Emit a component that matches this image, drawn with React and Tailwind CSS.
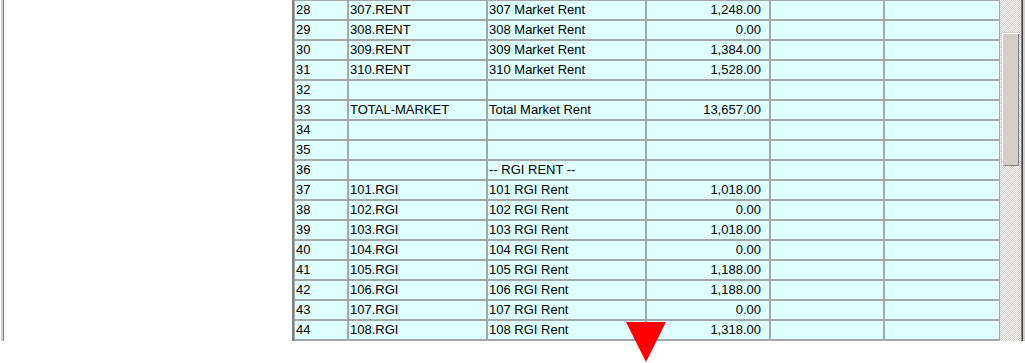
const rows = [
  ['28', '307.RENT', '307 Market Rent', '1,248.00'],
  ['29', '308.RENT', '308 Market Rent', '0.00'],
  ['30', '309.RENT', '309 Market Rent', '1,384.00'],
  ['31', '310.RENT', '310 Market Rent', '1,528.00'],
  ['32', '', '', ''],
  ['33', 'TOTAL-MARKET', 'Total Market Rent', '13,657.00'],
  ['34', '', '', ''],
  ['35', '', '', ''],
  ['36', '', '-- RGI RENT --', ''],
  ['37', '101.RGI', '101 RGI Rent', '1,018.00'],
  ['38', '102.RGI', '102 RGI Rent', '0.00'],
  ['39', '103.RGI', '103 RGI Rent', '1,018.00'],
  ['40', '104.RGI', '104 RGI Rent', '0.00'],
  ['41', '105.RGI', '105 RGI Rent', '1,188.00'],
  ['42', '106.RGI', '106 RGI Rent', '1,188.00'],
  ['43', '107.RGI', '107 RGI Rent', '0.00'],
  ['44', '108.RGI', '108 RGI Rent', '1,318.00'],
  ['', '', '', ''],
];

const cell = 'h-[20px] shrink-0 border border-[#a0a8a8] bg-[#e0ffff] leading-[18px] whitespace-nowrap overflow-hidden';

const App = () => {
  return (
    <div className="relative w-[1025px] h-[363px] bg-white overflow-hidden font-['Liberation_Sans',Arial,sans-serif] text-[13px] text-black">
      <div className="flex h-[341px]">
        {/* left frame */}
        <div className="w-[292px] flex shrink-0">
          <div className="w-[1px] bg-white" />
          <div className="w-[2px] bg-[#d4d0c8]" />
          <div className="w-[1px] bg-[#808080]" />
          <div className="flex-1 bg-white" />
        </div>

        {/* grid frame */}
        <div className="flex border-l-2 border-[#808080] overflow-hidden">
          <div className="w-[706px] flex flex-col">
            {rows.map((r, i) => (
              <div key={i} className="flex">
                <div className={`${cell} w-[54px] pl-[1px]`}>{r[0]}</div>
                <div className={`${cell} w-[139px] pl-[1px]`}>{r[1]}</div>
                <div className={`${cell} w-[159px] pl-[1px]`}>{r[2]}</div>
                <div className={`${cell} w-[124px] pr-[8px] text-right`}>{r[3]}</div>
                <div className={`${cell} w-[114px]`} />
                <div className={`${cell} w-[116px]`} />
              </div>
            ))}
          </div>

          {/* scrollbar */}
          <div className="w-[21px] shrink-0 bg-[repeating-conic-gradient(#d4d0c8_0_25%,#ffffff_0_50%)] bg-[length:2px_2px]">
            <div className="ml-[1px] mt-[32px] w-[18px] h-[134px] bg-[#d4d0c8] border-t border-l border-[#d4d0c8] border-r-[#404040] border-b-[#404040] shadow-[inset_1px_1px_#ffffff,inset_-1px_-1px_#808080]" />
          </div>
          <div className="flex shrink-0">
            <div className="w-[1px] bg-[#808080]" />
            <div className="w-[1px] bg-[#404040]" />
            <div className="w-[2px] bg-[#d4d0c8]" />
          </div>
        </div>
      </div>

      {/* red marker */}
      <svg className="absolute left-[626px] top-[322px]" width="40" height="40" viewBox="0 0 40 40">
        <polygon points="0,0 40,0 20,40" fill="#ff0000" />
      </svg>
    </div>
  );
};

export default App;
